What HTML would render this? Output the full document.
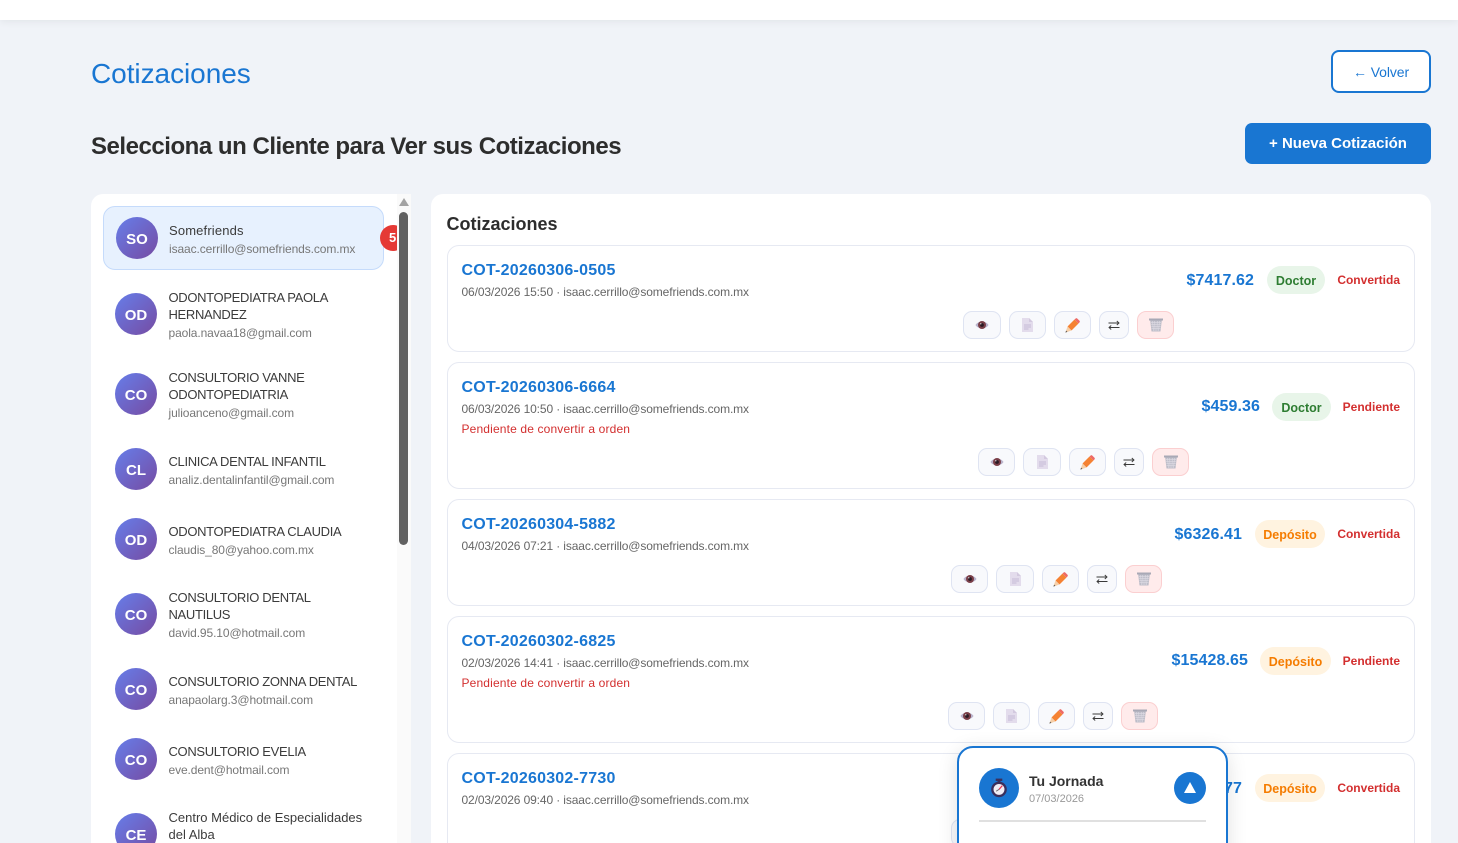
<!DOCTYPE html>
<html lang="es"><head><meta charset="utf-8"><title>Cotizaciones</title>
<style>
*{box-sizing:border-box}
html,body{margin:0;padding:0;width:1458px;height:843px;overflow:hidden}
body{background:#f0f3f8;font-family:"Liberation Sans",sans-serif;color:#333}
#root{position:absolute;left:0;top:0;width:1458px;height:843px;overflow:hidden;background:#f0f3f8}
.a{position:absolute}
.t{position:absolute;white-space:nowrap;line-height:20px}
.r{text-align:right}
.av{position:absolute;width:42px;height:42px;border-radius:50%;background:linear-gradient(135deg,#667eea,#764ba2);color:#fff;font-weight:700;font-size:15px;line-height:46px;text-align:center}
.n{font-size:13px;color:#3b3b3b;left:168.5px;margin-top:1px}
.u{letter-spacing:-.33px}
.e{font-size:12px;color:#777;left:168.5px;letter-spacing:-.1px}
.card{position:absolute;left:447px;width:968px;background:#fff;border:1px solid #e6e9f2;border-radius:12px}
.id{left:461.5px;font-size:16px;font-weight:700;color:#1976d2;letter-spacing:.22px;margin-top:1.5px}
.m{left:461.5px;font-size:12px;color:#666;letter-spacing:-.12px}
.w{left:461.5px;font-size:12px;color:#d32f2f;letter-spacing:.15px}
.p{font-size:16px;font-weight:700;color:#1976d2;right:204px;letter-spacing:.1px}
.b{position:absolute;height:28px;border-radius:14px;font-size:12.5px;font-weight:700;line-height:30px;text-align:center}
.dr{background:#e8f5e9;color:#2e7d32}
.de{background:#fff3e0;color:#f57c00}
.s{right:58px;font-size:12px;font-weight:700;color:#d32f2f}
.i{position:absolute;height:28px;background:#f8f9fc;border:1px solid #dfe4f2;border-radius:9px;display:flex;align-items:center;justify-content:center}
.x{background:#ffebeb;border-color:#fbcfd0}
svg{display:block}
</style></head><body>
<div id="root">
<svg width="0" height="0" style="position:absolute">
<symbol id="eye" viewBox="0 0 14 10"><path d="M0.500 5C3 .5 11 .5 13.500 5C11 9.500 3 9.500 .5 5Z" fill="#b9b3cc"/><circle cx="7" cy="5" r="4" fill="#7a3f48"/><circle cx="7" cy="5" r="1.900" fill="#2a1a24"/><circle cx="5.800" cy="3.800" r=".7" fill="#ddd"/></symbol>
<symbol id="doc" viewBox="0 0 11 14"><path d="M0 0H7L11 4V14H0Z" fill="#e3dcec"/><path d="M7 0L11 4H7Z" fill="#d3c9df"/><path d="M2 7H9M2 9H9M2 11H6.500" stroke="#c6bad6" stroke-width="1"/></symbol>
<symbol id="pen" viewBox="0 0 15 15"><path d="M2.500 8.500L9.500 1.500L13.500 5.500L6.500 12.500Z" fill="#f58233"/><path d="M9.500 1.500L10.800 .4Q11.500 -.1 12.200 .5L14.500 2.800Q15.100 3.500 14.600 4.300L13.500 5.500Z" fill="#ee6a66"/><path d="M2.500 8.500L6.500 12.500L.4 14.600Z" fill="#f6cfa8"/><path d="M.4 14.600L1.100 12.600L2.400 13.900Z" fill="#555"/></symbol>
<symbol id="sw" viewBox="0 0 12 10"><path d="M.5 3H11M8.800 1L11 3L8.800 5" fill="none" stroke="#3a3a3a" stroke-width=".9"/><path d="M11.500 7.500H1M3.200 5.500L1 7.500L3.200 9.500" fill="none" stroke="#3a3a3a" stroke-width=".9"/></symbol>
<symbol id="tr" viewBox="0 0 14 14"><path d="M0 .5H14V2.500H0Z" fill="#a9a9b6"/><path d="M1.200 2.500H12.800L11.500 13.500H2.500Z" fill="#bdbdc8"/><path d="M3.500 3L4.500 13M5.700 3L6.100 13M8.300 3L7.900 13M10.500 3L9.500 13M2 4.700H12M2.200 6.700H11.800M2.400 8.700H11.600M2.600 10.700H11.400" stroke="#dedbe4" stroke-width=".6"/></symbol>
</svg>

<div class="a" style="left:0;top:0;width:1458px;height:20px;background:#fff;box-shadow:0 2px 8px rgba(0,0,0,.06)"></div>

<div class="t" style="left:91px;top:54px;line-height:40px;font-size:28px;color:#1976d2;letter-spacing:-.05px">Cotizaciones</div>
<div class="a" style="left:1331px;top:50px;width:100px;height:43px;background:#fff;border:2px solid #1976d2;border-radius:8px;color:#1976d2;font-size:14px;line-height:40px;text-align:center;letter-spacing:-.1px">← Volver</div>
<div class="t" style="left:91px;top:129px;line-height:36px;font-size:24px;font-weight:700;color:#2d2d2d;letter-spacing:-.47px">Selecciona un Cliente para Ver sus Cotizaciones</div>
<div class="a" style="left:1245px;top:123px;width:186px;height:41px;background:#1976d2;border-radius:7px;color:#fff;font-size:15px;font-weight:700;line-height:42px;text-align:center">+ Nueva Cotización</div>

<!-- Panel izquierdo -->
<div class="a" style="left:91px;top:194px;width:320px;height:660px;background:#fff;border-radius:12px 0 0 0;overflow:hidden">
  <div class="a" style="left:306px;top:0;width:14px;height:660px;background:#fafafa"></div>
  <div class="a" style="left:308px;top:18px;width:9px;height:333px;background:#616161;border-radius:5px"></div>
  <div class="a" style="left:308px;top:4px;width:0;height:0;border-left:5px solid transparent;border-right:5px solid transparent;border-bottom:8px solid #a3a3a3"></div>
</div>
<div class="a" style="left:103px;top:206px;width:281px;height:64px;background:#e7f1fe;border:1px solid #c5dbfb;border-radius:12px"></div>
<div class="a" style="left:380px;top:225px;width:17px;height:26px;overflow:hidden"><div class="a" style="left:0;top:0;width:26px;height:26px;border-radius:50%;background:#e53935;color:#fff;font-size:13px;font-weight:700;line-height:26px;padding-left:9px">5</div></div>

<div class="av" style="left:116px;top:217px">SO</div>
<div class="t n" style="left:169px;top:220px;letter-spacing:.15px">Somefriends</div>
<div class="t e" style="left:169px;top:239px">isaac.cerrillo@somefriends.com.mx</div>

<div class="av" style="left:115px;top:293px">OD</div>
<div class="t n u" style="top:287px">ODONTOPEDIATRA PAOLA</div>
<div class="t n u" style="top:304px">HERNANDEZ</div>
<div class="t e" style="top:323px">paola.navaa18@gmail.com</div>

<div class="av" style="left:115px;top:373px">CO</div>
<div class="t n u" style="top:367px">CONSULTORIO VANNE</div>
<div class="t n u" style="top:384px">ODONTOPEDIATRIA</div>
<div class="t e" style="top:403px">julioanceno@gmail.com</div>

<div class="av" style="left:115px;top:448px">CL</div>
<div class="t n u" style="top:451px">CLINICA DENTAL INFANTIL</div>
<div class="t e" style="top:470px">analiz.dentalinfantil@gmail.com</div>

<div class="av" style="left:115px;top:518px">OD</div>
<div class="t n u" style="top:521px">ODONTOPEDIATRA CLAUDIA</div>
<div class="t e" style="top:540px">claudis_80@yahoo.com.mx</div>

<div class="av" style="left:115px;top:593px">CO</div>
<div class="t n u" style="top:587px">CONSULTORIO DENTAL</div>
<div class="t n u" style="top:604px">NAUTILUS</div>
<div class="t e" style="top:623px">david.95.10@hotmail.com</div>

<div class="av" style="left:115px;top:668px">CO</div>
<div class="t n u" style="top:671px">CONSULTORIO ZONNA DENTAL</div>
<div class="t e" style="top:690px">anapaolarg.3@hotmail.com</div>

<div class="av" style="left:115px;top:738px">CO</div>
<div class="t n u" style="top:741px">CONSULTORIO EVELIA</div>
<div class="t e" style="top:760px">eve.dent@hotmail.com</div>

<div class="av" style="left:115px;top:813px">CE</div>
<div class="t n" style="top:807px">Centro Médico de Especialidades</div>
<div class="t n" style="top:824px">del Alba</div>

<!-- Panel derecho -->
<div class="a" style="left:431px;top:194px;width:1000px;height:660px;background:#fff;border-radius:12px 12px 0 0"></div>
<div class="t" style="left:446.500px;top:214px;font-size:18px;font-weight:700;color:#2d2d2d">Cotizaciones</div>

<!-- Tarjeta 1 -->
<div class="card" style="top:245px;height:107px"></div>
<div class="t id" style="top:259px">COT-20260306-0505</div>
<div class="t m" style="top:282px">06/03/2026 15:50 · isaac.cerrillo@somefriends.com.mx</div>
<div class="t p" style="top:271px">$7417.62</div>
<div class="b dr" style="left:1267px;top:266px;width:58px">Doctor</div>
<div class="t s" style="top:270px">Convertida</div>
<div class="i" style="left:963px;top:311px;width:38px"><svg width="14" height="10"><use href="#eye"/></svg></div>
<div class="i" style="left:1009px;top:311px;width:37px"><svg width="11" height="14"><use href="#doc"/></svg></div>
<div class="i" style="left:1054px;top:311px;width:37px"><svg width="15" height="15"><use href="#pen"/></svg></div>
<div class="i" style="left:1099px;top:311px;width:30px"><svg width="12" height="10"><use href="#sw"/></svg></div>
<div class="i x" style="left:1137px;top:311px;width:37px"><svg width="14" height="14"><use href="#tr"/></svg></div>

<!-- Tarjeta 2 -->
<div class="card" style="top:362px;height:127px"></div>
<div class="t id" style="top:376px">COT-20260306-6664</div>
<div class="t m" style="top:399px">06/03/2026 10:50 · isaac.cerrillo@somefriends.com.mx</div>
<div class="t w" style="top:419px">Pendiente de convertir a orden</div>
<div class="t p" style="top:397px;right:198px">$459.36</div>
<div class="b dr" style="left:1272px;top:393px;width:59px">Doctor</div>
<div class="t s" style="top:397px">Pendiente</div>
<div class="i" style="left:978px;top:448px;width:37px"><svg width="14" height="10"><use href="#eye"/></svg></div>
<div class="i" style="left:1023px;top:448px;width:38px"><svg width="11" height="14"><use href="#doc"/></svg></div>
<div class="i" style="left:1069px;top:448px;width:37px"><svg width="15" height="15"><use href="#pen"/></svg></div>
<div class="i" style="left:1114px;top:448px;width:30px"><svg width="12" height="10"><use href="#sw"/></svg></div>
<div class="i x" style="left:1152px;top:448px;width:37px"><svg width="14" height="14"><use href="#tr"/></svg></div>

<!-- Tarjeta 3 -->
<div class="card" style="top:499px;height:107px"></div>
<div class="t id" style="top:513px">COT-20260304-5882</div>
<div class="t m" style="top:536px">04/03/2026 07:21 · isaac.cerrillo@somefriends.com.mx</div>
<div class="t p" style="top:525px;right:216px">$6326.41</div>
<div class="b de" style="left:1255px;top:520px;width:70px">Depósito</div>
<div class="t s" style="top:524px">Convertida</div>
<div class="i" style="left:951px;top:565px;width:37px"><svg width="14" height="10"><use href="#eye"/></svg></div>
<div class="i" style="left:996px;top:565px;width:38px"><svg width="11" height="14"><use href="#doc"/></svg></div>
<div class="i" style="left:1042px;top:565px;width:37px"><svg width="15" height="15"><use href="#pen"/></svg></div>
<div class="i" style="left:1087px;top:565px;width:30px"><svg width="12" height="10"><use href="#sw"/></svg></div>
<div class="i x" style="left:1125px;top:565px;width:37px"><svg width="14" height="14"><use href="#tr"/></svg></div>

<!-- Tarjeta 4 -->
<div class="card" style="top:616px;height:127px"></div>
<div class="t id" style="top:630px">COT-20260302-6825</div>
<div class="t m" style="top:653px">02/03/2026 14:41 · isaac.cerrillo@somefriends.com.mx</div>
<div class="t w" style="top:673px">Pendiente de convertir a orden</div>
<div class="t p" style="top:651px;right:210px">$15428.65</div>
<div class="b de" style="left:1260px;top:647px;width:71px">Depósito</div>
<div class="t s" style="top:651px">Pendiente</div>
<div class="i" style="left:948px;top:702px;width:37px"><svg width="14" height="10"><use href="#eye"/></svg></div>
<div class="i" style="left:993px;top:702px;width:37px"><svg width="11" height="14"><use href="#doc"/></svg></div>
<div class="i" style="left:1038px;top:702px;width:37px"><svg width="15" height="15"><use href="#pen"/></svg></div>
<div class="i" style="left:1083px;top:702px;width:30px"><svg width="12" height="10"><use href="#sw"/></svg></div>
<div class="i x" style="left:1121px;top:702px;width:37px"><svg width="14" height="14"><use href="#tr"/></svg></div>

<!-- Tarjeta 5 -->
<div class="card" style="top:753px;height:110px"></div>
<div class="t id" style="top:767px">COT-20260302-7730</div>
<div class="t m" style="top:790px">02/03/2026 09:40 · isaac.cerrillo@somefriends.com.mx</div>
<div class="t p" style="top:779px;right:216px">$1024.77</div>
<div class="b de" style="left:1255px;top:774px;width:70px">Depósito</div>
<div class="t s" style="top:778px">Convertida</div>
<div class="i" style="left:951px;top:819px;width:37px"></div>

<!-- Tu Jornada -->
<div class="a" style="left:957px;top:746px;width:271px;height:120px;background:#fff;border:2px solid #1976d2;border-radius:16px;box-shadow:0 4px 20px rgba(0,0,0,.12)"></div>
<div class="a" style="left:979px;top:768px;width:40px;height:40px;border-radius:50%;background:#1976d2;display:flex;align-items:center;justify-content:center">
<svg width="16" height="20" viewBox="0 0 17 20"><rect x="5" y="0" width="7" height="2.500" fill="#3a2f5c"/><rect x="7" y="2" width="3" height="2" fill="#3a2f5c"/><circle cx="8.500" cy="11.500" r="8.300" fill="#3a2f5c"/><circle cx="8.500" cy="11.500" r="5.800" fill="#f1edf5"/><path d="M8.500 11.500L12 7.500" stroke="#e5344e" stroke-width="1.300"/><path d="M8.500 11.500L5.500 13.500" stroke="#666" stroke-width="1"/></svg></div>
<div class="t" style="left:1029px;top:771px;font-size:14px;font-weight:700;color:#333">Tu Jornada</div>
<div class="t" style="left:1029px;top:789px;font-size:11px;color:#999">07/03/2026</div>
<div class="a" style="left:1174px;top:772px;width:32px;height:32px;border-radius:50%;background:#1976d2"></div>
<div class="a" style="left:1184px;top:782px;width:0;height:0;border-left:6px solid transparent;border-right:6px solid transparent;border-bottom:11px solid #fff"></div>
<div class="a" style="left:979px;top:820px;width:227px;height:2px;background:#e0e0e0"></div>
</div>
</body></html>
